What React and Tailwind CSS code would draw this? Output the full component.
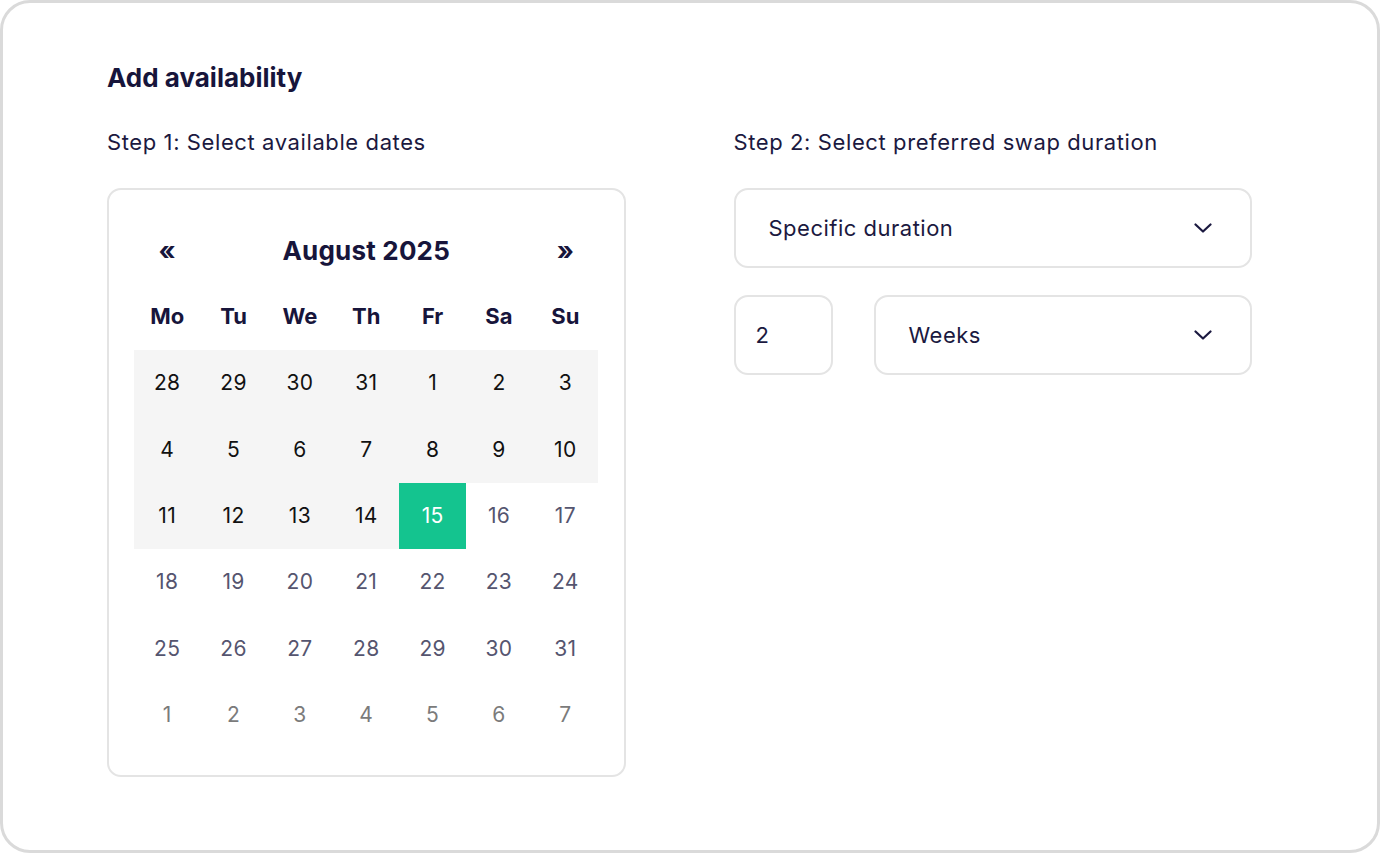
import React from "react";

const weekdays = ["Mo", "Tu", "We", "Th", "Fr", "Sa", "Su"];

// each day: [label, kind] — kind: range | selected | month | next
const days = [
  ...[28, 29, 30, 31].map((d) => [d, "range"]),
  ...[1, 2, 3, 4, 5, 6, 7, 8, 9, 10, 11, 12, 13, 14].map((d) => [d, "range"]),
  [15, "selected"],
  ...Array.from({ length: 16 }, (_, i) => [i + 16, "month"]),
  ...[1, 2, 3, 4, 5, 6, 7].map((d) => [d, "next"]),
];

const dayStyles = {
  range: "bg-[#f5f5f5] text-[#111111]",
  selected: "bg-[#14c48f] text-white",
  month: "text-[#55556f]",
  next: "text-[#7b7b7b]",
};

function Chevron() {
  return (
    <svg width="18" height="10" viewBox="0 0 18 10" fill="none">
      <path
        d="M1.5 1.5 L9 8.5 L16.5 1.5"
        stroke="#1b1940"
        strokeWidth="2.2"
        strokeLinecap="round"
        strokeLinejoin="round"
      />
    </svg>
  );
}

function SelectBox({ label, className = "" }) {
  return (
    <div
      className={`flex h-[80px] items-center justify-between rounded-[14px] border-2 border-[#e4e4e4] bg-white pl-[33px] pr-[38px] text-[22px] tracking-[0.5px] text-[#1b1940] ${className}`}
    >
      <span>{label}</span>
      <Chevron />
    </div>
  );
}

function Calendar() {
  return (
    <div className="rounded-[14px] border-2 border-[#e4e4e4] bg-white px-[25px] py-[27px]">
      <div className="grid grid-cols-7 auto-rows-[66.4px] text-[21px]">
        {/* header */}
        <button className="flex items-center justify-center text-[26px] font-bold text-[#17153b]">
          «
        </button>
        <div className="col-span-5 flex items-center justify-center text-[26px] font-bold tracking-[0.2px] text-[#17153b]">
          August 2025
        </div>
        <button className="flex items-center justify-center text-[26px] font-bold text-[#17153b]">
          »
        </button>

        {/* weekday row */}
        {weekdays.map((w) => (
          <div
            key={w}
            className="flex items-center justify-center text-[22px] font-bold text-[#17153b]"
          >
            {w}
          </div>
        ))}

        {/* days */}
        {days.map(([d, kind], i) => (
          <div
            key={i}
            className={`flex items-center justify-center tracking-[0.3px] ${dayStyles[kind]}`}
          >
            {d}
          </div>
        ))}
      </div>
    </div>
  );
}

export default function App() {
  return (
    <div
      className="h-[853px] w-[1380px] bg-white"
      style={{ fontFamily: "Inter, 'Noto Sans', sans-serif" }}
    >
      <div className="h-full w-full rounded-[30px] border-[3px] border-[#dadada] pl-[104px] pt-[59px]">
        <h1 className="text-[26px] font-bold leading-8 text-[#17153b]">
          Add availability
        </h1>

        <div className="mt-[34px] grid w-[1145px] grid-cols-2 gap-x-[108px]">
          {/* Step 1 */}
          <div>
            <p className="text-[22px] leading-7 tracking-[0.6px] text-[#1b1940]">
              Step 1: Select available dates
            </p>
            <div className="mt-[32px]">
              <Calendar />
            </div>
          </div>

          {/* Step 2 */}
          <div>
            <p className="text-[22px] leading-7 tracking-[0.6px] text-[#1b1940]">
              Step 2: Select preferred swap duration
            </p>
            <div className="mt-[32px] flex flex-col gap-[27px]">
              <SelectBox label="Specific duration" />
              <div className="flex gap-[41px]">
                <div className="flex h-[80px] w-[99px] items-center rounded-[14px] border-2 border-[#e4e4e4] pl-[20px] text-[22px] text-[#1b1940]">
                  2
                </div>
                <SelectBox label="Weeks" className="flex-1" />
              </div>
            </div>
          </div>
        </div>
      </div>
    </div>
  );
}
